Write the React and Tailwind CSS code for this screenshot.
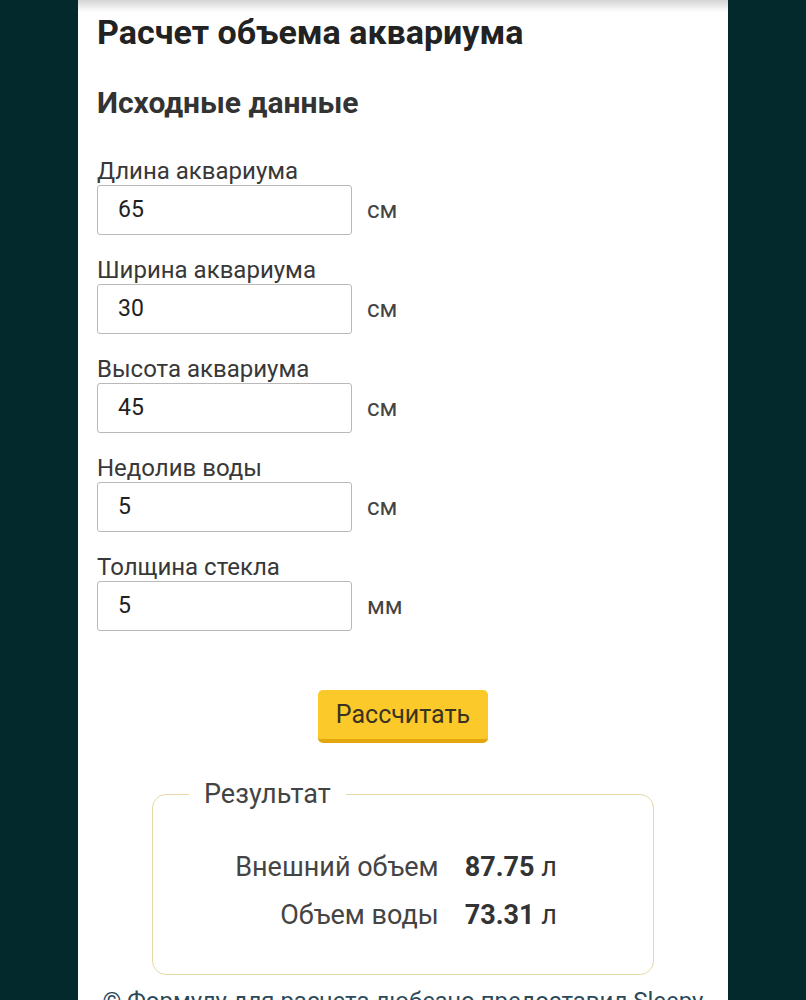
import React from 'react';

const fields = [
  { label: 'Длина аквариума', value: '65', unit: 'см' },
  { label: 'Ширина аквариума', value: '30', unit: 'см' },
  { label: 'Высота аквариума', value: '45', unit: 'см' },
  { label: 'Недолив воды', value: '5', unit: 'см' },
  { label: 'Толщина стекла', value: '5', unit: 'мм' },
];

const Field = ({ label, value, unit }) => (
  <div className="mb-[21px]">
    <div className="text-[24px] leading-[28px] text-[#383838]">{label}</div>
    <div className="flex items-center">
      <div className="w-[255px] h-[50px] border border-[#b9b9b9] rounded-[3px] flex items-center pl-[20px] text-[23px] text-[#222]">
        {value}
      </div>
      <span className="ml-[15px] text-[24px] text-[#444]">{unit}</span>
    </div>
  </div>
);

const ResultRow = ({ label, value }) => (
  <>
    <div className="text-right text-[27px] leading-[32px] text-[#444]">{label}</div>
    <div className="text-[27px] leading-[32px] text-[#333]">
      <span className="font-bold">{value}</span> л
    </div>
  </>
);

export default function App() {
  return (
    <div className="min-h-[1000px] bg-[#03292d] flex justify-center" style={{ fontFamily: 'Roboto, "Liberation Sans", sans-serif' }}>
      <div className="w-[650px] bg-white h-[1000px] overflow-hidden">
        <div className="h-[12px] bg-gradient-to-b from-[#d4d4d4] to-white" />
        <div className="px-[19px]">
          <h1 className="text-[34px] leading-[40px] font-bold text-[#222]">Расчет объема аквариума</h1>
          <h2 className="text-[30px] leading-[36px] font-bold text-[#333] mt-[33px] mb-[36px]">Исходные данные</h2>

          {fields.map((f) => (
            <Field key={f.label} {...f} />
          ))}

          <div className="flex justify-center mt-[59px]">
            <button className="w-[170px] h-[53px] bg-[#fbc92a] border-b-[4px] border-[#e3a60d] rounded-[5px] text-[25px] text-[#3a3320]">
              Рассчитать
            </button>
          </div>

          <fieldset className="mx-[55px] mt-[35px] h-[197px] border border-[#e4d9a6] rounded-[14px] px-[36px]">
            <legend className="px-[15px] text-[27px] leading-[32px] text-[#444]">Результат</legend>
            <div className="grid grid-cols-[auto_auto] justify-center gap-x-[26px] gap-y-[16px] mt-[41px] mr-[14px]">
              <ResultRow label="Внешний объем" value="87.75" />
              <ResultRow label="Объем воды" value="73.31" />
            </div>
          </fieldset>

          <p className="text-center text-[24px] text-[#2c4a5a] mt-[8px] whitespace-nowrap">
            © Формулу для расчета любезно предоставил Sleepy
          </p>
        </div>
      </div>
    </div>
  );
}
